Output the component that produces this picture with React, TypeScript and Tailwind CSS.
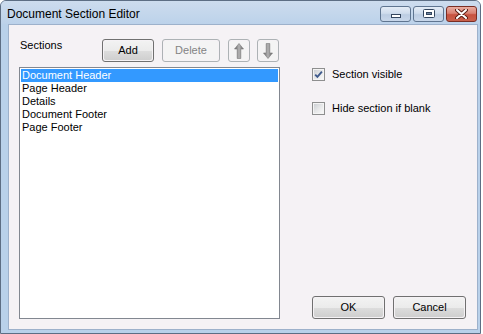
import React from "react";

function PushButton({
  label,
  width,
  disabled,
  className = "",
  children,
}: {
  label?: string;
  width: string;
  disabled?: boolean;
  className?: string;
  children?: React.ReactNode;
}) {
  return (
    <div
      className={`${width} h-[23px] rounded-[3px] border ${
        disabled ? "border-[#adb2b5]" : "border-[#707070]"
      } p-[1px] ${className}`}
    >
      <div
        className={`w-full h-full rounded-[2px] flex items-center justify-center ${
          disabled
            ? "bg-[#f4f4f4] text-[#838383]"
            : "bg-[linear-gradient(to_bottom,#f2f2f2_0%,#ebebeb_50%,#dddddd_51%,#cfcfcf_100%)] text-black"
        }`}
      >
        {label}
        {children}
      </div>
    </div>
  );
}

function Arrow({ down }: { down?: boolean }) {
  const id = down ? "ag-down" : "ag-up";
  return (
    <svg width="10" height="16" viewBox="0 0 10 16" style={{ transform: down ? "rotate(180deg)" : undefined }}>
      <defs>
        <linearGradient id={id} x1="0" y1="0" x2="1" y2="0">
          <stop offset="0" stopColor="#5f5f5f" />
          <stop offset="0.5" stopColor="#b3b3b3" />
          <stop offset="1" stopColor="#6a6a6a" />
        </linearGradient>
      </defs>
      <polygon
        points="5,0.5 9.5,6 6.8,6 6.8,15.5 3.2,15.5 3.2,6 0.5,6"
        fill={`url(#${id})`}
        stroke="#7a7a7a"
        strokeWidth="0.6"
      />
    </svg>
  );
}

function CheckBox({ checked, label }: { checked?: boolean; label: string }) {
  return (
    <div className="flex items-start h-[13px]">
      <div className="w-[13px] h-[13px] border border-[#8e8f8f] bg-[#f4f4f4] p-[1px] shrink-0">
        <div className="w-full h-full bg-[linear-gradient(135deg,#cdd0d4_0%,#e6e7e8_50%,#f8f8f8_100%)] flex items-center justify-center">
          {checked && (
            <svg width="9" height="9" viewBox="0 0 9 9">
              <path d="M1.2 4.6 L3.4 6.9 L7.9 1.6" fill="none" stroke="#3f5a8c" strokeWidth="1.9" />
            </svg>
          )}
        </div>
      </div>
      <span className="ml-[7px] leading-[13px] whitespace-nowrap">{label}</span>
    </div>
  );
}

function CaptionButton({ kind }: { kind: "min" | "max" | "close" }) {
  const isClose = kind === "close";
  return (
    <div
      className={`w-[31px] h-[16px] rounded-[3px] border ${
        isClose ? "border-[#7a2e24]" : "border-[#5f7590]"
      } flex items-center justify-center ${
        isClose
          ? "bg-[linear-gradient(to_bottom,#e9ada1_0%,#d98172_45%,#c8523f_55%,#c9614c_100%)]"
          : "bg-[linear-gradient(to_bottom,#e4ecf6_0%,#cfdcec_45%,#bccde2_55%,#c8d7ea_100%)]"
      }`}
    >
      {kind === "min" && (
        <svg width="12" height="10" viewBox="0 0 12 10">
          <rect x="1.5" y="5.5" width="9" height="3" fill="#ffffff" stroke="#34465e" strokeWidth="1" />
        </svg>
      )}
      {kind === "max" && (
        <svg width="12" height="10" viewBox="0 0 12 10">
          <rect x="0.5" y="0.5" width="11" height="8" rx="1" fill="#ffffff" stroke="#34465e" strokeWidth="1" />
          <rect x="3.5" y="3.5" width="5" height="2" fill="#6f86a3" stroke="#34465e" strokeWidth="1" />
        </svg>
      )}
      {isClose && (
        <svg width="13" height="10" viewBox="0 0 13 10">
          <path d="M2 1 L11 9 M11 1 L2 9" stroke="#5a1d14" strokeWidth="4" strokeLinecap="round" />
          <path d="M2 1 L11 9 M11 1 L2 9" stroke="#ffffff" strokeWidth="2" strokeLinecap="round" />
        </svg>
      )}
    </div>
  );
}

export default function App() {
  const items = ["Document Header", "Page Header", "Details", "Document Footer", "Page Footer"];
  return (
    <div className="w-[483px] h-[334px] bg-white flex overflow-hidden font-['Liberation_Sans',Arial,sans-serif] text-[11px] leading-[13px] text-black">
      <div className="w-[481px] h-[334px] shrink-0 border border-[#5d6e84] rounded-t-[6px] bg-[#b9d1ea] flex flex-col">
        {/* Title bar */}
        <div className="h-[23px] shrink-0 flex items-start rounded-t-[5px] bg-[linear-gradient(to_bottom,#cddcee_0%,#bcd2ea_100%)]">
          <div className="pl-[6px] pt-[6px] text-[12px] leading-[14px] whitespace-nowrap">Document Section Editor</div>
          <div className="ml-auto flex gap-[2px] pt-[5px] pr-[3px]">
            <CaptionButton kind="min" />
            <CaptionButton kind="max" />
            <CaptionButton kind="close" />
          </div>
        </div>
        {/* Frame + client */}
        <div className="flex-1 flex pl-[7px] pr-[2px] pb-[3px] min-h-0">
          <div className="flex-1 border border-[#9db1cb] bg-[#f5f2f5] flex">
            {/* Left column */}
            <div className="flex flex-col pl-[10px] pt-[14px] pb-[10px]">
              <div className="flex h-[23px]">
                <div className="w-[83px] pl-[1px]">Sections</div>
                <PushButton label="Add" width="w-[52px]" />
                <PushButton label="Delete" width="w-[58px]" disabled className="ml-[8px]" />
                <PushButton width="w-[22px]" disabled className="ml-[8px]">
                  <Arrow />
                </PushButton>
                <PushButton width="w-[22px]" disabled className="ml-[7px]">
                  <Arrow down />
                </PushButton>
              </div>
              <div className="mt-[5px] w-[261px] flex-1 border border-[#828790] bg-white p-[1px]">
                {items.map((it, i) => (
                  <div
                    key={it}
                    className={`h-[13px] pl-[1px] leading-[13px] whitespace-nowrap ${
                      i === 0 ? "bg-[#3399ff] text-white" : ""
                    }`}
                  >
                    {it}
                  </div>
                ))}
              </div>
            </div>
            {/* Right column */}
            <div className="flex flex-col ml-[32px] pt-[43px] pb-[10px]">
              <div className="flex flex-col gap-[21px]">
                <CheckBox checked label="Section visible" />
                <CheckBox label="Hide section if blank" />
              </div>
              <div className="mt-auto flex gap-[8px]">
                <PushButton label="OK" width="w-[73px]" />
                <PushButton label="Cancel" width="w-[73px]" />
              </div>
            </div>
          </div>
        </div>
      </div>
    </div>
  );
}
